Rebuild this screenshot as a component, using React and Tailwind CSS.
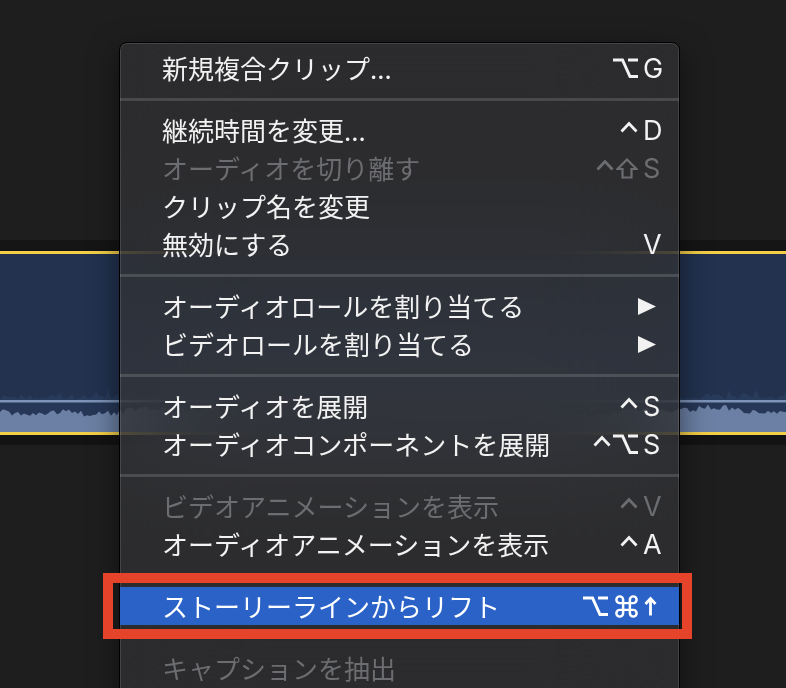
import React from "react";
import { Command } from "lucide-react";

// jagged audio waveform for the clip under the menu
const wave = (() => {
  let seed = 11;
  const rnd = () => {
    seed = (seed * 9301 + 49297) % 233280;
    return seed / 233280;
  };
  const top = [];
  const ghost = [];
  for (let x = 0; x <= 786; x += 3) {
    const base = 24 + Math.sin(x / 41) * 2.5 + Math.sin(x / 13) * 1.5;
    top.push(`${x},${(base + rnd() * 6).toFixed(1)}`);
    ghost.push(`${x},${(10 + rnd() * 6 - (rnd() > 0.9 ? 6 : 0)).toFixed(1)}`);
  }
  return {
    fill: `0,48 ${top.join(" ")} 786,48`,
    ghost: `0,18 ${ghost.join(" ")} 786,18`,
  };
})();

const Opt = () => (
  <svg width="25" height="20" viewBox="0 0 25 20" fill="none" stroke="currentColor" strokeWidth="3">
    <path d="M0 2H9.5L17 18.5H25M15 2H25" />
  </svg>
);

const Ctrl = () => (
  <svg width="18" height="20" viewBox="0 0 18 20" fill="none" stroke="currentColor" strokeWidth="2.8">
    <path d="M1.5 11.5L9 3.5L16.5 11.5" />
  </svg>
);

const Shift = () => (
  <svg width="22" height="21" viewBox="0 0 22 21" fill="none" stroke="currentColor" strokeWidth="2.2">
    <path d="M11 1.5L20.5 11H15.5V19.5H6.5V11H1.5Z" />
  </svg>
);

const Cmd = () => (
  <Command size={27} strokeWidth={2.2} className="-my-[4px] ml-[3px] -mr-[2px]" />
);

const Up = () => (
  <svg width="13" height="20" viewBox="0 0 13 20" fill="none" stroke="currentColor" strokeWidth="2.8" className="ml-[1px]">
    <path d="M6.5 19.5V3M1.5 8L6.5 2.5L11.5 8" />
  </svg>
);

const MODS = { opt: Opt, ctrl: Ctrl, shift: Shift, cmd: Cmd };

const sections = [
  [{ label: "新規複合クリップ...", mods: ["opt"], key: "G" }],
  [
    { label: "継続時間を変更...", mods: ["ctrl"], key: "D" },
    { label: "オーディオを切り離す", mods: ["ctrl", "shift"], key: "S", disabled: true },
    { label: "クリップ名を変更" },
    { label: "無効にする", key: "V" },
  ],
  [
    { label: "オーディオロールを割り当てる", submenu: true },
    { label: "ビデオロールを割り当てる", submenu: true },
  ],
  [
    { label: "オーディオを展開", mods: ["ctrl"], key: "S" },
    { label: "オーディオコンポーネントを展開", mods: ["ctrl", "opt"], key: "S" },
  ],
  [
    { label: "ビデオアニメーションを表示", mods: ["ctrl"], key: "V", disabled: true },
    { label: "オーディオアニメーションを表示", mods: ["ctrl"], key: "A" },
  ],
  [{ label: "ストーリーラインからリフト", mods: ["opt", "cmd"], key: "up", selected: true }],
  [{ label: "キャプションを抽出", disabled: true }],
];

const MenuRow = ({ item }) => {
  const tone = item.selected
    ? "bg-[#2a62c7] text-white"
    : item.disabled
    ? "text-[#6c6d70]"
    : "text-[#f2f2f2]";
  return (
    <div className={`flex h-[38px] items-center pl-[42px] pr-[16px] ${tone}`}>
      <span className="flex-1 font-['Noto_Sans_CJK_JP',sans-serif] text-[26px] leading-none whitespace-nowrap">
        {item.label}
      </span>
      {item.submenu ? (
        <svg width="18" height="17" viewBox="0 0 18 17" className="mr-[7px]">
          <polygon points="0,0 18,8.5 0,17" fill="currentColor" />
        </svg>
      ) : (
        <div className="flex items-center">
          <div className="flex items-center justify-end gap-[2px] pr-[5px]">
            {(item.mods || []).map((m) => {
              const Icon = MODS[m];
              return <Icon key={m} />;
            })}
          </div>
          <div className="flex w-[20px] items-center font-['Inter',sans-serif] text-[27px] leading-none">
            {item.key === "up" ? <Up /> : item.key}
          </div>
        </div>
      )}
    </div>
  );
};

export default function App() {
  return (
    <div className="relative h-[688px] w-[786px] overflow-hidden bg-[#1e1e1e]">
      {/* timeline */}
      <div className="h-[240px]" />
      <div className="h-[11px] bg-[#151515]" />
      <div className="h-[3px] bg-[#f3cf48]" />
      <div className="flex h-[178px] flex-col justify-end bg-[#22324f]">
        <svg width="786" height="48" viewBox="0 0 786 48" preserveAspectRatio="none">
          <polygon points={wave.ghost} fill="#2b3d5e" opacity="0.8" />
          <rect x="0" y="18" width="786" height="30" fill="#263757" />
          <polygon points={wave.fill} fill="#6b80a4" />
          <rect x="0" y="16" width="786" height="2.5" fill="#7d93b8" />
        </svg>
      </div>
      <div className="h-[3px] bg-[#f3cf48]" />
      <div className="h-[10px] bg-[#131313]" />

      {/* context menu */}
      <div className="absolute left-[119px] top-[42px] w-[561px] overflow-hidden rounded-[8px] border border-black bg-[rgba(50,50,53,0.7)] pt-[6px] shadow-[0_10px_30px_rgba(0,0,0,0.5),inset_0_0_0_1px_rgba(255,255,255,0.12)] backdrop-blur-3xl">
        {sections.map((sec, i) => (
          <div key={i}>
            {i > 0 && (
              <div className="flex h-[24px] items-center">
                <div className="h-[3px] w-full bg-[rgba(255,255,255,0.14)]" />
              </div>
            )}
            {sec.map((item) => (
              <MenuRow key={item.label} item={item} />
            ))}
          </div>
        ))}
        <div className="h-[20px]" />
      </div>

      {/* annotation */}
      <div className="absolute left-[103px] top-[573px] h-[66px] w-[589px] border-[10px] border-[#e6432b]" />
    </div>
  );
}
